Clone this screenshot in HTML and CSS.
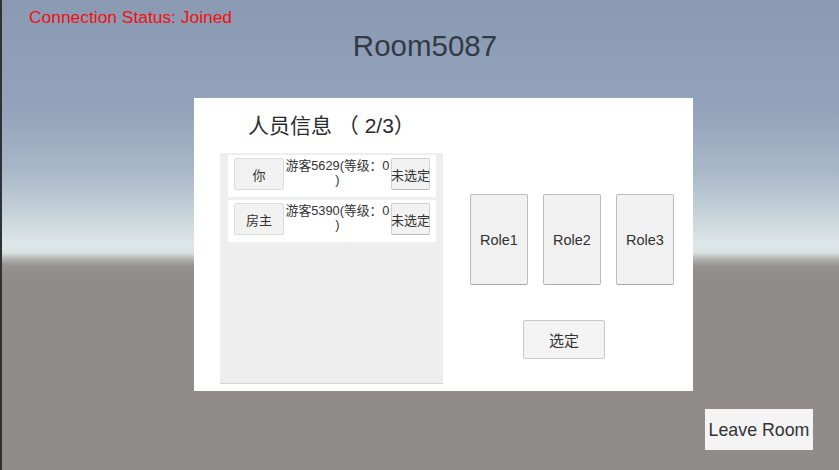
FILE: index.html
```html
<!DOCTYPE html>
<html lang="zh-CN">
<head>
<meta charset="utf-8">
<title>Room5087</title>
<link rel="stylesheet" href="styles.css">
</head>
<body>
<div class="page">
  <p class="status">Connection Status: Joined</p>
  <h1 class="room">Room5087</h1>
  <div class="panel">
    <div class="left">
      <div class="title">人员信息 （ 2/3）</div>
      <div class="list">
        <div class="row">
          <button class="btn tag">你</button>
          <div class="name">游客5629(等级：0)</div>
          <button class="btn state">未选定</button>
        </div>
        <div class="row">
          <button class="btn tag">房主</button>
          <div class="name">游客5390(等级：0)</div>
          <button class="btn state">未选定</button>
        </div>
      </div>
    </div>
    <div class="right">
      <div class="roles">
        <button class="btn role">Role1</button>
        <button class="btn role">Role2</button>
        <button class="btn role">Role3</button>
      </div>
      <button class="btn choose">选定</button>
    </div>
  </div>
  <div class="bottom">
    <button class="btn leave">Leave Room</button>
  </div>
</div>
</body>
</html>
```
FILE: styles.css
```css
* { box-sizing: border-box; }
html, body { margin: 0; padding: 0; }
body {
  width: 839px;
  height: 470px;
  overflow: hidden;
  font-family: "Liberation Sans", "Noto Sans CJK SC", sans-serif;
  color: #323232;
  background: linear-gradient(to bottom,
    #8a9ab3 0px, #93a3bb 110px, #a8b7c8 170px, #c6d3da 215px,
    #dfe8e8 245px, #d9e0e0 253px, #b3b3b2 259px, #95928f 266px,
    #8f8c89 276px, #8f8c89 470px);
  box-shadow: inset 2px 0 0 #2e3238;
}
.page {
  display: flex;
  flex-direction: column;
  height: 470px;
}
.status {
  margin: 0;
  padding: 8px 0 0 29px;
  font-size: 17.4px;
  line-height: 19px;
  color: #f01010;
}
.room {
  margin: 2px 0 0 0;
  padding-left: 11px;
  text-align: center;
  font-size: 29.5px;
  line-height: 34px;
  font-weight: normal;
  color: #333a44;
}
.panel {
  margin: 35px 0 0 194px;
  width: 499px;
  height: 293px;
  background: #ffffff;
  display: flex;
  padding-left: 26px;
}
.left {
  display: flex;
  flex-direction: column;
  width: 223px;
}
.title {
  height: 55px;
  padding: 16px 0 0 28px;
  font-size: 21px;
  line-height: 24px;
  color: #2a2a2a;
  white-space: nowrap;
}
.list {
  width: 223px;
  height: 231px;
  background: #eeeeee;
  border-bottom: 1px solid #d4d4d4;
  padding: 2px 7px 0 8px;
  display: flex;
  flex-direction: column;
  gap: 3px;
}
.row {
  height: 42px;
  background: #ffffff;
  display: flex;
  align-items: flex-start;
  padding: 3px 0 0 6px;
}
.btn {
  font-family: "Liberation Sans", "Noto Sans CJK SC", sans-serif;
  color: #323232;
  background: #f2f2f2;
  border: 1px solid #d0d0d0;
  border-bottom-color: #b8b8b8;
  border-radius: 2px;
  padding: 0;
  margin: 0;
  white-space: nowrap;
  display: flex;
  align-items: center;
  justify-content: center;
}
.tag {
  width: 50px;
  height: 32px;
  font-size: 13px;
  border-color: #dcdcdc;
}
.name {
  width: 105px;
  margin-left: 1px;
  padding-top: 1px;
  font-size: 12.8px;
  line-height: 14px;
  text-align: center;
  color: #333333;
  line-break: anywhere;
}
.state {
  width: 39px;
  height: 32px;
  margin-left: 1px;
  font-size: 13px;
  overflow: visible;
}
.right {
  display: flex;
  flex-direction: column;
  padding: 96px 0 0 27px;
}
.roles {
  display: flex;
  gap: 15px;
}
.role {
  width: 58px;
  height: 91px;
  font-size: 14.5px;
  background: #f1f1f1;
  border-color: #bcbcbc;
  border-bottom-color: #a9a9a9;
}
.choose {
  margin: 35px 0 0 53px;
  width: 82px;
  height: 39px;
  font-size: 15px;
  background: #f3f3f3;
  border-color: #c8c8c8;
}
.bottom {
  display: flex;
  padding: 18px 0 0 705px;
}
.leave {
  width: 108px;
  height: 41px;
  padding-top: 2px;
  font-size: 17.8px;
  background: #f4f4f4;
  border: none;
  border-radius: 0;
}
```
